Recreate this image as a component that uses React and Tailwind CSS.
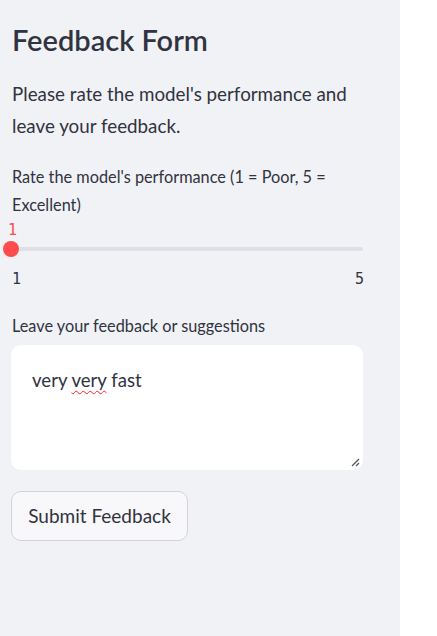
export default function App() {
  const font = { fontFamily: '"Lato", "Noto Sans", sans-serif' };
  const mono = { fontFamily: '"DejaVu Sans Mono", monospace', fontSize: '15px' };
  return (
    <div className="flex h-[636px] w-[437px] bg-white" style={font}>
      <div className="flex h-full w-[400px] flex-col bg-[#f0f2f6] pl-3 pr-[37px] text-[#31333f]">
        <h2 className="mt-[20px] text-[29px] font-semibold leading-[40px]">Feedback Form</h2>
        <p className="mt-[18px] text-[18.8px] leading-[32px]">
          Please rate the model's performance and leave your feedback.
        </p>
        <div className="mt-[21px] text-[16.3px] leading-[28px]">
          Rate the model's performance (1 = Poor, 5 = Excellent)
        </div>
        <div className="relative -ml-[1px] mt-[1px]">
          <div className="ml-[-3px] leading-[20px] text-[#ff4b4b]" style={mono}>1</div>
          <div className="relative mt-[1px] h-[16px]">
            <div className="absolute left-0 right-0 top-[6px] h-[4px] rounded-full bg-[#dde0e7]" />
            <div className="absolute left-[-8px] top-0 h-[16px] w-[16px] rounded-full bg-[#ff4b4b]" />
          </div>
          <div className="mt-[10px] flex justify-between leading-[24px]" style={mono}>
            <span className="ml-[1px]">1</span>
            <span className="mr-[-1px]">5</span>
          </div>
        </div>
        <div className="mt-[21px] text-[16.3px] leading-[28px]">Leave your feedback or suggestions</div>
        <div className="relative -ml-[1px] mt-[5px] h-[125px] shrink-0 rounded-[10px] bg-white px-[21px] pt-[21px]">
          <span className="text-[18.6px] leading-[28px]">
            very{' '}
            <span className="underline decoration-[#ff2020] decoration-wavy decoration-[1px] underline-offset-[3px]">very</span>{' '}
            fast
          </span>
          <svg className="absolute bottom-[3px] right-[3px]" width="10" height="10" viewBox="0 0 10 10">
            <path d="M2 9 L9 2 M6 9 L9 6" stroke="#555" strokeWidth="1.3" />
          </svg>
        </div>
        <button className="-ml-[1px] mt-[21px] h-[50px] w-[177px] shrink-0 rounded-[10px] border border-[#d3d4d9] bg-[#f8f8fa] text-[19px] text-[#31333f]">
          Submit Feedback
        </button>
      </div>
      <div className="flex-1" />
    </div>
  );
}
